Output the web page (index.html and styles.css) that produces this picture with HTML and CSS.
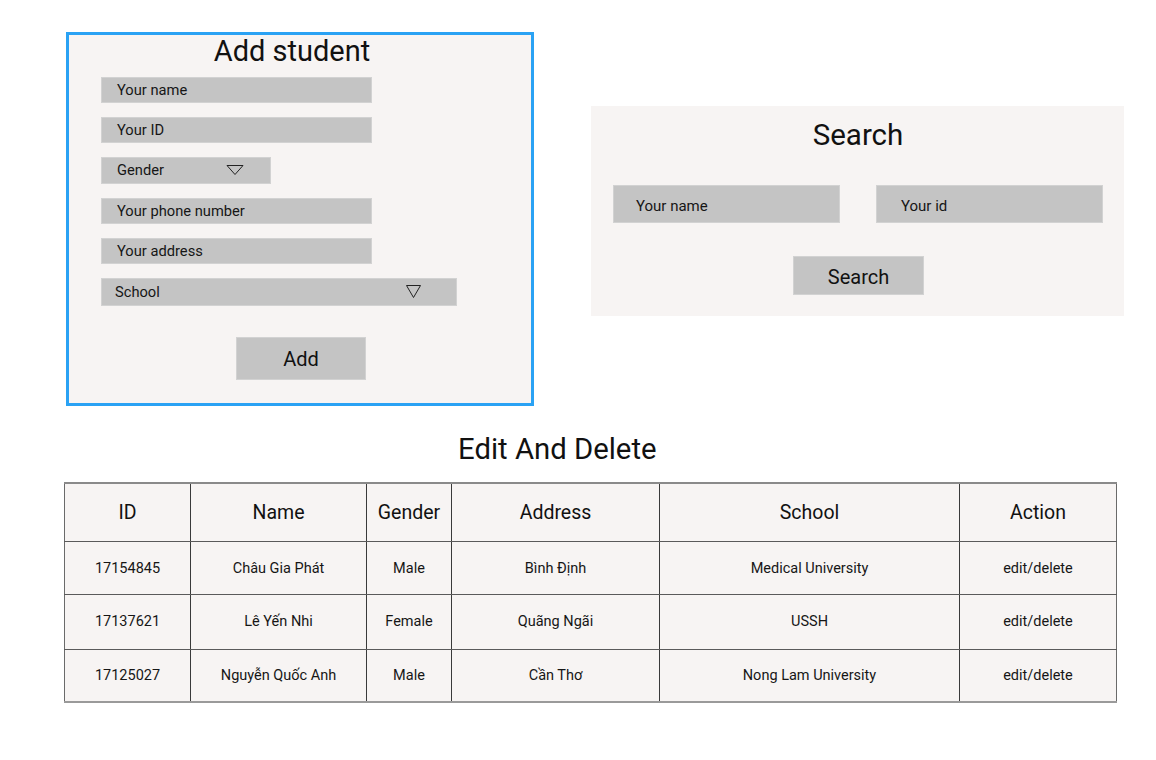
FILE: index.html
```html
<!DOCTYPE html>
<html lang="vi">
<head>
<meta charset="utf-8">
<title>Student manager</title>
<link rel="stylesheet" href="styles.css">
</head>
<body>
<div class="top">
  <section class="add-panel">
    <h2 class="add-title">Add student</h2>
    <div class="add-fields">
      <div class="field w-long">Your name</div>
      <div class="field w-long">Your ID</div>
      <div class="field w-short select">
        <span>Gender</span>
        <svg class="caret-g" width="18" height="10" viewBox="0 0 18 10"><polygon points="1,0.5 17,0.5 9,9.5" fill="none" stroke="#222" stroke-width="1"/></svg>
      </div>
      <div class="field w-long">Your phone number</div>
      <div class="field w-long">Your address</div>
      <div class="field w-wide select school">
        <span>School</span>
        <svg class="caret-s" width="15" height="13" viewBox="0 0 15 13"><polygon points="0.5,0.5 14.5,0.5 7.5,12.5" fill="none" stroke="#222" stroke-width="1"/></svg>
      </div>
    </div>
    <div class="add-btn-row"><div class="btn add-btn">Add</div></div>
  </section>

  <section class="search-panel">
    <h2 class="search-title">Search</h2>
    <div class="search-fields">
      <div class="sfield">Your name</div>
      <div class="sfield">Your id</div>
    </div>
    <div class="search-btn-row"><div class="btn search-btn">Search</div></div>
  </section>
</div>

<h2 class="table-title">Edit And Delete</h2>

<table class="students">
  <colgroup>
    <col style="width:126px">
    <col style="width:176px">
    <col style="width:85px">
    <col style="width:208px">
    <col style="width:300px">
    <col style="width:157px">
  </colgroup>
  <thead>
    <tr><th>ID</th><th>Name</th><th>Gender</th><th>Address</th><th>School</th><th>Action</th></tr>
  </thead>
  <tbody>
    <tr class="r1"><td>17154845</td><td>Châu Gia Phát</td><td>Male</td><td>Bình Định</td><td>Medical University</td><td>edit/delete</td></tr>
    <tr class="r2"><td>17137621</td><td>Lê Yến Nhi</td><td>Female</td><td>Quãng Ngãi</td><td>USSH</td><td>edit/delete</td></tr>
    <tr class="r3"><td>17125027</td><td>Nguyễn Quốc Anh</td><td>Male</td><td>Cần Thơ</td><td>Nong Lam University</td><td>edit/delete</td></tr>
  </tbody>
</table>
</body>
</html>
```
FILE: styles.css
```css
* { box-sizing: border-box; }
html, body { margin: 0; padding: 0; background: #ffffff; }
body {
  font-family: Roboto, "Noto Sans", "Liberation Sans", sans-serif;
  color: #111;
  width: 1156px;
  height: 760px;
  overflow: hidden;
}
h2 { margin: 0; font-weight: 400; }

.top {
  display: flex;
  align-items: flex-start;
  padding: 32px 0 0 66px;
  gap: 57px;
}

/* Add student */
.add-panel {
  width: 468px;
  height: 374px;
  border: 3px solid #2aa2f4;
  background: #f7f4f3;
  padding: 0 0 0 32px;
}
.add-title {
  width: 382px;
  text-align: center;
  font-size: 29px;
  line-height: 34px;
  margin-top: -1px;
}
.add-fields {
  display: flex;
  flex-direction: column;
  gap: 14px;
  margin-top: 9px;
}
.field {
  height: 26px;
  background: #c4c4c4;
  border: 1px solid #d2d2d2;
  font-size: 14.7px;
  line-height: 24px;
  padding-left: 15px;
  color: #161616;
}
.w-long { width: 271px; }
.w-short { width: 170px; height: 27px; }
.w-wide { width: 356px; height: 28px; padding-left: 13px; }
.select {
  display: flex;
  align-items: center;
  justify-content: space-between;
}
.select span { line-height: 1; }
.caret-g { margin-right: 26px; margin-top: -1px; }
.caret-s { margin-right: 35px; margin-top: -2px; }

.add-btn-row { padding-left: 135px; margin-top: 31px; }
.btn {
  background: #c4c4c4;
  border: 1px solid #d2d2d2;
  font-size: 20px;
  display: flex;
  align-items: center;
  justify-content: center;
  color: #111;
}
.add-btn { width: 130px; height: 43px; }

/* Search */
.search-panel {
  margin-top: 74px;
  width: 533px;
  height: 210px;
  background: #f7f4f3;
  padding: 12px 21px 0 22px;
}
.search-title {
  text-align: center;
  font-size: 29.5px;
  line-height: 34px;
}
.search-fields {
  display: flex;
  gap: 36px;
  margin-top: 33px;
}
.sfield {
  width: 227px;
  height: 38px;
  background: #c4c4c4;
  border: 1px solid #d2d2d2;
  font-size: 15px;
  line-height: 36px;
  padding: 2px 0 0 22px;
  color: #161616;
}
.sfield + .sfield { padding-left: 24px; }
.search-btn-row { display: flex; justify-content: center; margin-top: 33px; padding-left: 1px; }
.search-btn { width: 131px; height: 39px; padding-top: 2px; }

/* Table */
.table-title {
  font-size: 29.3px;
  line-height: 34px;
  margin: 26px 0 0 458px;
}
.students {
  margin: 16px 0 0 64px;
  width: 1052px;
  table-layout: fixed;
  border-collapse: collapse;
  background: #f7f4f3;
  border-top: 2px solid #8a8a8a;
  border-bottom: 2px solid #9a9a9a;
}
.students th, .students td {
  border-left: 1px solid #3a3a3a;
  border-right: 1px solid #3a3a3a;
  border-bottom: 1.5px solid #5a5a5a;
  text-align: center;
  vertical-align: middle;
  padding: 0;
}
.students th:first-child, .students td:first-child { border-left: 1px solid #6a6a6a; }
.students th:last-child, .students td:last-child { border-right: 1px solid #6a6a6a; }
.students th {
  font-weight: 400;
  font-size: 19.5px;
  height: 58px;
  color: #111;
}
.students td {
  font-size: 14.5px;
  color: #161616;
}
.r1 td { height: 53px; padding-top: 1px; }
.r2 td { height: 55px; }
.r3 td { height: 53px; }
```
